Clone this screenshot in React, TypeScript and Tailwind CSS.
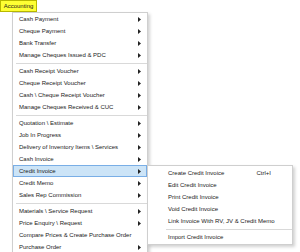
import React from 'react';

type Item = { label: string; arrow?: boolean; sep?: boolean; active?: boolean };

const mainItems: Item[] = [
  { label: 'Cash Payment', arrow: true },
  { label: 'Cheque Payment', arrow: true },
  { label: 'Bank Transfer', arrow: true },
  { label: 'Manage Cheques Issued & PDC', arrow: true, sep: true },
  { label: 'Cash Receipt Voucher', arrow: true },
  { label: 'Cheque Receipt Voucher', arrow: true },
  { label: 'Cash \\ Cheque Receipt Voucher', arrow: true },
  { label: 'Manage Cheques Received & CUC', arrow: true, sep: true },
  { label: 'Quotation \\ Estimate', arrow: true },
  { label: 'Job In Progress', arrow: true },
  { label: 'Delivery of Inventory Items \\ Services', arrow: true },
  { label: 'Cash Invoice', arrow: true },
  { label: 'Credit Invoice', arrow: true, active: true },
  { label: 'Credit Memo', arrow: true },
  { label: 'Sales Rep Commission', arrow: true, sep: true },
  { label: 'Materials \\ Service Request', arrow: true },
  { label: 'Price Enquiry \\ Request', arrow: true },
  { label: 'Compare Prices & Create Purchase Order' },
  { label: 'Purchase Order', arrow: true },
];

const subItems = [
  { label: 'Create Credit Invoice', shortcut: 'Ctrl+I' },
  { label: 'Edit Credit Invoice' },
  { label: 'Print Credit Invoice' },
  { label: 'Void Credit Invoice' },
  { label: 'Link Invoice With RV, JV & Credit Memo', sep: true },
  { label: 'Import Credit Invoice' },
];

const Arrow = () => (
  <svg width="3" height="5" viewBox="0 0 3 5" className="shrink-0">
    <path d="M0 0 L3 2.5 L0 5 Z" fill="#222" />
  </svg>
);

export default function App() {
  return (
    <div className="w-[300px] h-[252px] overflow-hidden bg-white relative font-['Liberation_Sans',sans-serif] text-[6px] text-[#1a1a1a]">
      <div className="h-[12px] w-[37px] bg-[#ffff33] border border-[#b8b800] flex items-center justify-center text-[6px] leading-none">
        Accounting
      </div>
      <div className="ml-[12px] w-[136px] border border-[#cfcfcf] bg-white shadow-[2px_2px_3px_rgba(0,0,0,0.18)]">
        {mainItems.map((it, i) => (
          <div key={i}>
            <div
              className={`h-[12px] flex items-center pl-[5px] pr-[5px] border ${
                it.active ? 'bg-[#cce4f7] border-[#79aee6]' : 'border-transparent'
              }`}
            >
              <span className="flex-1 whitespace-nowrap">{it.label}</span>
              {it.arrow && <Arrow />}
            </div>
            {it.sep && (
              <div className="h-[4px] flex items-center pl-[3px]">
                <div className="h-[1px] w-full bg-[#d9d9d9]" />
              </div>
            )}
          </div>
        ))}
      </div>
      <div className="absolute left-[147px] top-[165px] w-[146px] border border-[#cfcfcf] bg-white shadow-[2px_2px_3px_rgba(0,0,0,0.18)] py-[1px]">
        {subItems.map((it, i) => (
          <div key={i}>
            <div className="h-[12px] flex items-center pl-[20px] pr-[8px]">
              <span className="flex-1 whitespace-nowrap">{it.label}</span>
              {it.shortcut && <span className="mr-[13px]">{it.shortcut}</span>}
            </div>
            {it.sep && (
              <div className="h-[4px] flex items-center pl-[18px]">
                <div className="h-[1px] w-full bg-[#d9d9d9]" />
              </div>
            )}
          </div>
        ))}
      </div>
    </div>
  );
}
